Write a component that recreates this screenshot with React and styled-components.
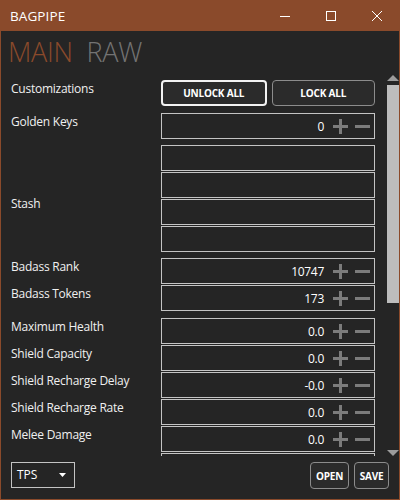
import React from "react";
import styled, { createGlobalStyle } from "styled-components";

const Global = createGlobalStyle`
  html, body { margin: 0; padding: 0; background: #252525; }
  body { font-family: "Open Sans", "Noto Sans", sans-serif; }
  * { box-sizing: border-box; }
`;

const BROWN = "#8a4a2b";

const Window = styled.div`
  width: 400px;
  height: 500px;
  display: flex;
  flex-direction: column;
  background: #252525;
  border: 1px solid ${BROWN};
  border-top: none;
  overflow: hidden;
  color: #f2f2f2;
`;

const TitleBar = styled.div`
  height: 31px;
  flex: none;
  background: ${BROWN};
  display: flex;
  align-items: center;
  margin: 0 -1px;
`;

const Title = styled.div`
  flex: 1;
  padding-left: 10px;
  font-size: 13.5px;
  color: #ffffff;
  letter-spacing: 0.1px;
`;

const WinButton = styled.div`
  width: 46px;
  height: 31px;
  display: flex;
  align-items: center;
  justify-content: center;
`;

const Tabs = styled.div`
  height: 41px;
  flex: none;
  display: flex;
  align-items: flex-start;
  gap: 14px;
  padding-left: 7px;
  padding-top: 4px;
`;

const Tab = styled.div`
  font-size: 27px;
  font-weight: 300;
  line-height: 33px;
  color: ${(p) => (p.$active ? BROWN : "#737373")};
  letter-spacing: -0.3px;
`;

const Middle = styled.div`
  flex: none;
  height: 384px;
  display: flex;
`;

const Viewport = styled.div`
  flex: 1;
  overflow: hidden;
  padding: 8px 11px 0 9px;
`;

const List = styled.div`
  display: flex;
  flex-direction: column;
  gap: 6px;
`;

const Group = styled.div`
  display: grid;
  grid-template-columns: 151px 214px;
  align-items: ${(p) => (p.$center ? "center" : "start")};
`;

const Label = styled.div`
  font-size: 12px;
  line-height: 17px;
  height: ${(p) => (p.$row ? "27px" : "auto")};
  color: #f0f0f0;
  letter-spacing: -0.25px;
  padding-left: 1px;
  margin-top: ${(p) => p.$offset || 0}px;
  white-space: nowrap;
`;

const LabelStack = styled.div`
  display: flex;
  flex-direction: column;
`;

const Stack = styled.div`
  display: flex;
  flex-direction: column;
  gap: 1px;
`;

const ButtonPair = styled.div`
  display: flex;
  gap: 5px;
  height: 27px;
`;

const Btn = styled.div`
  flex: ${(p) => (p.$grow ? 1 : "none")};
  width: ${(p) => (p.$w ? p.$w + "px" : "auto")};
  height: ${(p) => p.$h || 26}px;
  border: ${(p) => (p.$primary ? "2px solid #f2f2f2" : "1px solid #8c8c8c")};
  border-radius: 4px;
  background: #2b2b2b;
  display: flex;
  align-items: center;
  justify-content: center;
  font-size: 10px;
  line-height: 14px;
  font-weight: 700;
  color: #ffffff;
  letter-spacing: -0.2px;
`;

const Box = styled.div`
  height: 26px;
  border: 1px solid #c4c4c4;
  display: flex;
  align-items: center;
  justify-content: flex-end;
  padding-right: 4px;
`;

const Value = styled.div`
  font-size: 12px;
  color: #ffffff;
  margin-right: 9px;
  letter-spacing: -0.3px;
`;

const Stepper = styled.div`
  display: flex;
  align-items: center;
  gap: 7px;
`;

const ScrollBar = styled.div`
  width: 13px;
  flex: none;
  display: flex;
  flex-direction: column;
  align-items: center;
  padding-top: 3px;
`;

const Arrow = styled.div`
  width: 0;
  height: 0;
  border-left: 6px solid transparent;
  border-right: 6px solid transparent;
  ${(p) =>
    p.$up
      ? "border-bottom: 6px solid #9c9c9c;"
      : "border-top: 6px solid #9c9c9c;"}
`;

const Track = styled.div`
  flex: 1;
  width: 12px;
  padding: 4px 0;
`;

const Thumb = styled.div`
  width: 12px;
  height: 218px;
  background: #bdbdbd;
`;

const Footer = styled.div`
  flex: 1;
  display: flex;
  align-items: flex-start;
  padding: 6px 10px 0 10px;
`;

const Select = styled.div`
  width: 64px;
  height: 26px;
  border: 1px solid #c4c4c4;
  display: flex;
  align-items: center;
  justify-content: space-between;
  padding: 0 8px 0 5px;
  font-size: 12px;
  line-height: 16px;
  color: #ffffff;
`;

const Spacer = styled.div`
  flex: 1;
`;

const FooterButtons = styled.div`
  display: flex;
  gap: 5px;
`;

const Plus = () => (
  <svg width="15" height="15" viewBox="0 0 15 15">
    <rect x="6" y="0" width="3" height="15" fill="#7c7c7c" />
    <rect x="0" y="6" width="15" height="3" fill="#7c7c7c" />
  </svg>
);

const Minus = () => (
  <svg width="15" height="15" viewBox="0 0 15 15">
    <rect x="0" y="6" width="15" height="3" fill="#7c7c7c" />
  </svg>
);

const NumberBox = ({ value }) => (
  <Box>
    <Value>{value}</Value>
    <Stepper>
      <Plus />
      <Minus />
    </Stepper>
  </Box>
);

const Single = ({ label, value }) => (
  <Group>
    <Label>{label}</Label>
    <NumberBox value={value} />
  </Group>
);

const Multi = ({ items }) => (
  <Group>
    <LabelStack>
      {items.map((it) => (
        <Label key={it[0]} $row>
          {it[0]}
        </Label>
      ))}
    </LabelStack>
    <Stack>
      {items.map((it) => (
        <NumberBox key={it[0]} value={it[1]} />
      ))}
    </Stack>
  </Group>
);

export default function App() {
  return (
    <>
      <Global />
      <Window>
        <TitleBar>
          <Title>BAGPIPE</Title>
          <WinButton>
            <svg width="10" height="10" viewBox="0 0 10 10">
              <rect x="0" y="5" width="10" height="1" fill="#fff" />
            </svg>
          </WinButton>
          <WinButton>
            <svg width="10" height="10" viewBox="0 0 10 10">
              <rect x="0.5" y="0.5" width="9" height="9" fill="none" stroke="#fff" strokeWidth="1" />
            </svg>
          </WinButton>
          <WinButton>
            <svg width="10" height="10" viewBox="0 0 10 10">
              <path d="M0 0 L10 10 M10 0 L0 10" stroke="#fff" strokeWidth="1" />
            </svg>
          </WinButton>
        </TitleBar>
        <Tabs>
          <Tab $active>MAIN</Tab>
          <Tab>RAW</Tab>
        </Tabs>
        <Middle>
          <Viewport>
            <List>
              <Group>
                <Label>Customizations</Label>
                <ButtonPair>
                  <Btn $grow $primary>UNLOCK ALL</Btn>
                  <Btn $grow>LOCK ALL</Btn>
                </ButtonPair>
              </Group>
              <Single label="Golden Keys" value="0" />
              <Group $center>
                <Label $offset={9}>Stash</Label>
                <Stack>
                  <Box />
                  <Box />
                  <Box />
                  <Box />
                </Stack>
              </Group>
              <Multi
                items={[
                  ["Badass Rank", "10747"],
                  ["Badass Tokens", "173"],
                ]}
              />
              <Multi
                items={[
                  ["Maximum Health", "0.0"],
                  ["Shield Capacity", "0.0"],
                  ["Shield Recharge Delay", "-0.0"],
                  ["Shield Recharge Rate", "0.0"],
                  ["Melee Damage", "0.0"],
                  ["Grenade Damage", "0.0"],
                ]}
              />
            </List>
          </Viewport>
          <ScrollBar>
            <Arrow $up />
            <Track>
              <Thumb />
            </Track>
            <Arrow />
          </ScrollBar>
        </Middle>
        <Footer>
          <Select>
            <span>TPS</span>
            <svg width="7" height="4" viewBox="0 0 7 4">
              <path d="M0 0 L7 0 L3.5 4 Z" fill="#fff" />
            </svg>
          </Select>
          <Spacer />
          <FooterButtons>
            <Btn $w={39} $h={27}>OPEN</Btn>
            <Btn $w={35} $h={27}>SAVE</Btn>
          </FooterButtons>
        </Footer>
      </Window>
    </>
  );
}
